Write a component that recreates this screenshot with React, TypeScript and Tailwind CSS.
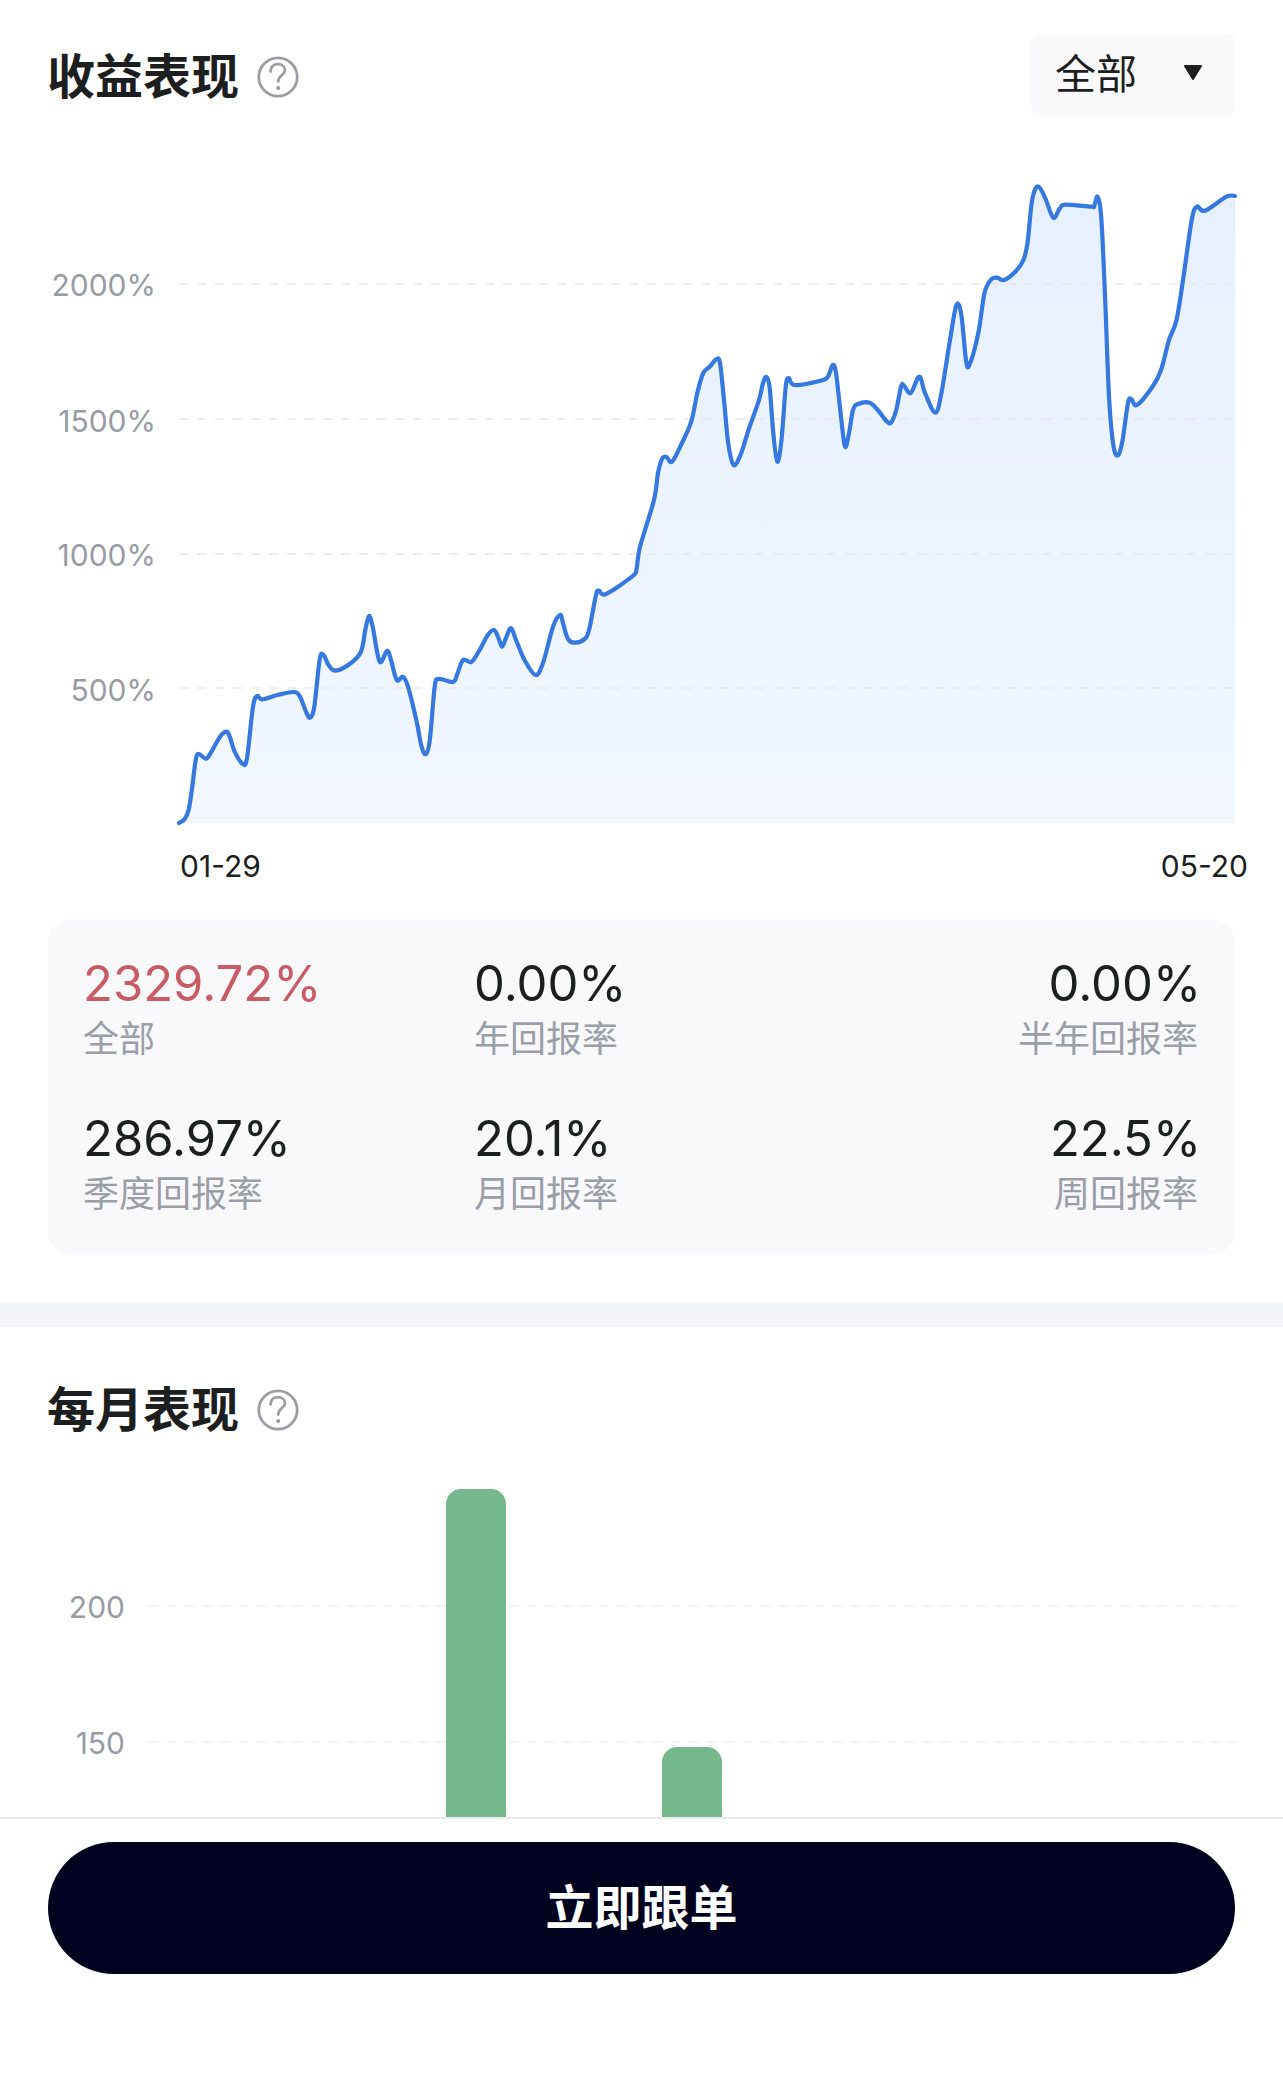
import React from 'react';

const FONT = "font-['Inter','Noto_Sans_CJK_SC',sans-serif]";
const AXIS_FONT = "Inter, 'Noto Sans CJK SC', sans-serif";

// traced from the reference, page coordinates
const POINTS: [number, number][] = [
  [179, 823], [184.5, 819.3], [188.6, 810], [191.8, 790], [195.9, 759], [199.2, 754], [206, 758.7], [212, 750.7],
  [220, 736.7], [226.5, 731.7], [229.8, 736.7], [234.7, 751.7], [242.9, 764], [247, 758], [253, 706.7], [257, 696],
  [262, 699.3], [277.6, 695], [293.9, 692], [300, 696.7], [306, 711.7], [310, 717.7], [314.3, 706.7], [319.6, 660],
  [323.3, 654.7], [328.6, 665], [335.5, 670.7], [351, 663], [361, 651.7], [365.3, 630], [369, 616], [372.7, 626.7],
  [379.6, 661.7], [387, 650.7], [391, 660], [396.7, 680], [403, 676.7], [408, 686.7], [416.3, 720], [421.6, 746.7],
  [426, 754], [429.8, 740], [434.7, 686.7], [438.8, 679], [453, 682], [457, 675], [463, 660], [471.4, 662],
  [479.6, 650], [487.8, 635], [493.9, 630], [498, 636.7], [502, 646.7], [506, 638], [511, 628], [516, 640],
  [524.5, 660], [535.5, 675], [543, 663], [553, 626.7], [560, 615], [563, 623], [568, 639], [575.5, 642.7],
  [585.7, 638], [589.8, 626.7], [596, 595], [598.8, 590.7], [606, 594], [632.7, 576], [636.7, 568], [640, 546.7],
  [654, 500], [658, 473], [662.5, 458], [666.7, 457.3], [672, 461.7], [681, 445], [691.2, 421.7], [697.3, 393],
  [703.3, 373], [709.7, 366.7], [716.4, 359.3], [720, 363], [724, 400], [728.2, 443], [733.5, 465], [740.5, 455],
  [748.5, 430], [759, 400], [763, 383], [766.3, 377], [769.6, 387], [773.3, 433], [777.3, 461.7], [781.5, 440],
  [785.7, 387], [788.7, 378], [794.7, 385], [820.5, 380.7], [827.9, 376.7], [832.7, 365], [836, 373], [841, 416.7],
  [845, 446.7], [849, 433], [853, 410], [858, 404], [869.7, 402.7], [877.8, 410], [886.2, 420.7], [891, 422.7],
  [896.2, 410], [901.2, 386], [904.2, 386], [910.7, 393], [919.3, 376.7], [925, 393], [935.3, 412.7], [941.4, 393],
  [949.5, 343], [955.5, 308], [959, 305], [962, 320], [966, 360], [969.4, 365], [978.3, 333], [984.5, 293],
  [990.7, 280], [996.7, 277.7], [1004, 280], [1015.3, 271.7], [1023.4, 260], [1027.5, 243], [1031.7, 203], [1035.8, 188],
  [1040, 188], [1046, 200], [1053.4, 218], [1060, 208], [1065.7, 204.7], [1091, 206.7], [1094.2, 206], [1097.6, 196.7],
  [1101.2, 216.7], [1105.2, 300], [1109.2, 400], [1113.6, 446.7], [1118.2, 455], [1122.6, 440], [1128, 403], [1131.4, 399],
  [1137, 405], [1152.5, 386.7], [1161, 370], [1169, 340], [1176.5, 320], [1183.5, 276.7], [1191.7, 220], [1196.8, 206.7],
  [1205, 210.7], [1226.5, 196.7], [1235, 196],
];

// catmull-rom through the points
const smoothPath = (pts: [number, number][]) => {
  let d = `M${pts[0][0]} ${pts[0][1]}`;
  for (let i = 0; i < pts.length - 1; i++) {
    const p0 = pts[Math.max(i - 1, 0)];
    const p1 = pts[i];
    const p2 = pts[i + 1];
    const p3 = pts[Math.min(i + 2, pts.length - 1)];
    const c1x = p1[0] + (p2[0] - p0[0]) / 6;
    const c1y = p1[1] + (p2[1] - p0[1]) / 6;
    const c2x = p2[0] - (p3[0] - p1[0]) / 6;
    const c2y = p2[1] - (p3[1] - p1[1]) / 6;
    d += ` C${c1x.toFixed(1)} ${c1y.toFixed(1)} ${c2x.toFixed(1)} ${c2y.toFixed(1)} ${p2[0]} ${p2[1]}`;
  }
  return d;
};

function HelpIcon() {
  return (
    <svg width="42" height="42" viewBox="0 0 42 42" fill="none" className="shrink-0">
      <circle cx="21" cy="21" r="19.2" stroke="#9b9da4" strokeWidth="2.8" />
      <path
        d="M13.6 15.5C13.6 10.8 16.8 8.2 21 8.2C25 8.2 28 10.8 28 14.3C28 18.8 21.2 19.6 21.2 25.6"
        stroke="#9b9da4"
        strokeWidth="2.8"
        strokeLinecap="round"
      />
      <circle cx="21.2" cy="32" r="2.1" fill="#9b9da4" />
    </svg>
  );
}

function SectionTitle({ children }: { children: React.ReactNode }) {
  return (
    <div className="flex items-center gap-[18px] ml-[-1px]">
      <h2 className="text-[48px] leading-[60px] font-semibold text-[#1d1e20]">{children}</h2>
      <HelpIcon />
    </div>
  );
}

function ReturnChart() {
  const line = smoothPath(POINTS);
  const gridY = [284, 419, 554, 688];
  const labels = [
    { text: '2000%', y: 296 },
    { text: '1500%', y: 431.5 },
    { text: '1000%', y: 566 },
    { text: '500%', y: 700.5 },
  ];
  return (
    <svg viewBox="0 115 1283 804" className="block w-[1283px] h-[804px]">
      <defs>
        <linearGradient id="areaFill" x1="0" y1="0" x2="0" y2="1">
          <stop offset="0" stopColor="#e6f0fd" />
          <stop offset="1" stopColor="#f2f7fe" />
        </linearGradient>
      </defs>
      <path d={`${line} L1235 823 L179 823 Z`} fill="url(#areaFill)" />
      {gridY.map((y) => (
        <line key={y} x1="179" x2="1233" y1={y} y2={y} stroke="#e6e8ec" strokeWidth="1.5" strokeDasharray="9 9" />
      ))}
      <path d={line} fill="none" stroke="#3478e0" strokeWidth="4.2" strokeLinejoin="round" strokeLinecap="round" />
      {labels.map((l) => (
        <text key={l.text} x="156" y={l.y} textAnchor="end" fontSize="30" fill="#989ba4" fontFamily={AXIS_FONT}>
          {l.text}
        </text>
      ))}
      <text x="180" y="877" fontSize="30" fill="#1d1e20" fontFamily={AXIS_FONT}>01-29</text>
      <text x="1248" y="877" textAnchor="end" fontSize="30" fill="#1d1e20" fontFamily={AXIS_FONT}>05-20</text>
    </svg>
  );
}

function Stat({ value, label, red, right }: { value: string; label: string; red?: boolean; right?: boolean }) {
  return (
    <div className={right ? 'text-right' : ''}>
      <div
        className={`text-[49px] leading-[56px] ${right ? 'mr-[-3px]' : ''} ${red ? 'text-[#c95b64]' : 'text-[#1d1e20]'}`}
      >
        {value}
      </div>
      <div className="text-[36px] leading-[48px] mt-[3px] text-[#9a9ea8]">{label}</div>
    </div>
  );
}

function MonthlyChart() {
  return (
    <svg viewBox="0 1440 1283 377" className="block w-[1283px] h-[377px]">
      {[1606, 1742].map((y) => (
        <line key={y} x1="149" x2="1235" y1={y} y2={y} stroke="#eceef1" strokeWidth="1.5" strokeDasharray="9 9" />
      ))}
      <text x="125" y="1618" textAnchor="end" fontSize="30" fill="#989ba4" fontFamily={AXIS_FONT}>200</text>
      <text x="125" y="1754" textAnchor="end" fontSize="30" fill="#989ba4" fontFamily={AXIS_FONT}>150</text>
      <path d="M446 1830V1504a15 15 0 0 1 15-15h30a15 15 0 0 1 15 15V1830Z" fill="#76b88e" />
      <path d="M662 1830V1762a15 15 0 0 1 15-15h30a15 15 0 0 1 15 15V1830Z" fill="#76b88e" />
    </svg>
  );
}

export default function App() {
  return (
    <div className={`${FONT} w-[1283px] h-[2074px] bg-white overflow-hidden flex flex-col`}>
      <div className="h-[1817px] overflow-hidden shrink-0">
        <section className="pt-[34px] pb-[48px]">
          <div className="flex items-start justify-between px-[48px]">
            <div className="pt-[13px]">
              <SectionTitle>收益表现</SectionTitle>
            </div>
            <div className="w-[204px] h-[81px] rounded-lg bg-[#f9f9fb] flex items-center pl-[24px]">
              <span className="text-[41px] leading-none text-[#1d1e20] font-normal">全部</span>
              <svg width="20" height="17" viewBox="0 0 20 17" className="ml-[46px] mt-[-4px]">
                <path d="M2 2H18L10 15Z" fill="#1d1e20" stroke="#1d1e20" strokeWidth="2" strokeLinejoin="round" />
              </svg>
            </div>
          </div>
          <ReturnChart />
          <div className="mx-[48px] h-[336px] rounded-[24px] bg-[#f9f9fb] pl-[35px] pr-[37px] pt-[37px]">
            <div className="grid grid-cols-[391px_1fr_auto] gap-y-[48px]">
              <Stat value="2329.72%" label="全部" red />
              <Stat value="0.00%" label="年回报率" />
              <Stat value="0.00%" label="半年回报率" right />
              <Stat value="286.97%" label="季度回报率" />
              <Stat value="20.1%" label="月回报率" />
              <Stat value="22.5%" label="周回报率" right />
            </div>
          </div>
        </section>
        <div className="h-[24px] bg-[#f4f5f8]" />
        <section className="pt-[53px]">
          <div className="px-[48px]">
            <SectionTitle>每月表现</SectionTitle>
          </div>
          <MonthlyChart />
        </section>
      </div>
      <footer className="flex-1 border-t-2 border-[#e8e9eb] bg-white px-[48px] pt-[23px]">
        <button className="w-full h-[132px] rounded-full bg-[#00001f] text-white text-[48px] font-semibold">
          立即跟单
        </button>
      </footer>
    </div>
  );
}
